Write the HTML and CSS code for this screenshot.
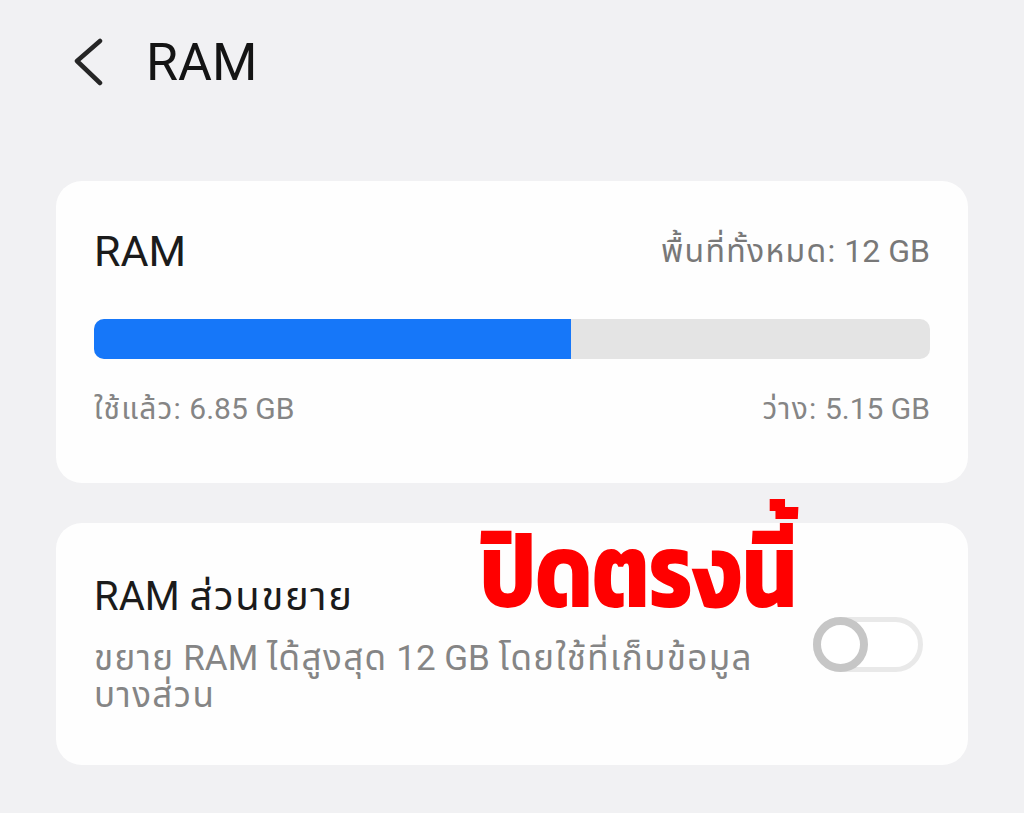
FILE: index.html
```html
<!DOCTYPE html>
<html lang="th">
<head>
<meta charset="utf-8">
<title>RAM</title>
<link rel="stylesheet" href="styles.css">
</head>
<body>
<div class="page">
  <header class="topbar">
    <svg class="back" width="32" height="50" viewBox="0 0 32 50" aria-hidden="true">
      <polyline points="26,3 3,23 26,45" fill="none" stroke="#262626" stroke-width="4.5" stroke-linecap="round" stroke-linejoin="round"/>
    </svg>
    <h1 class="topbar-title">RAM</h1>
  </header>

  <section class="card usage">
    <div class="usage-head">
      <span class="usage-label">RAM</span>
      <span class="usage-total"><span class="th">พื้นที่ทั้งหมด:</span> 12 GB</span>
    </div>
    <div class="bar"><div class="bar-fill" style="width:57.1%"></div></div>
    <div class="usage-meta">
      <span><span class="th">ใช้แล้ว:</span> 6.85 GB</span>
      <span><span class="th">ว่าง:</span> 5.15 GB</span>
    </div>
  </section>

  <section class="card ext">
    <div class="ext-text">
      <div class="ext-title">RAM <span class="th">ส่วนขยาย</span></div>
      <div class="ext-desc"><span class="th">ขยาย</span> RAM <span class="th">ได้สูงสุด</span> 12 GB <span class="th">โดยใช้ที่เก็บข้อมูล</span><br><span class="th">บางส่วน</span></div>
    </div>
    <div class="toggle" role="switch" aria-checked="false"><span class="knob"></span></div>
    <div class="note">ปิดตรงนี้</div>
  </section>
</div>
</body>
</html>
```
FILE: styles.css
```css
* { box-sizing: border-box; }
html, body { margin: 0; padding: 0; }
body {
  background: #f1f1f3;
  font-family: "Roboto", "Noto Sans", "Noto Sans Thai", sans-serif;
  color: #1b1b1b;
  width: 1024px;
  height: 813px;
  overflow: hidden;
}
.th { letter-spacing: 0.04em; }
.page {
  display: flex;
  flex-direction: column;
  padding: 0 56px;
}
.topbar {
  height: 126px;
  display: flex;
  align-items: center;
  padding-left: 18px;
  gap: 40px;
}
.back { display: block; }
.topbar-title {
  margin: 0;
  font-size: 52px;
  font-weight: 400;
  color: #141414;
  line-height: 60px;
}
.card {
  background: #fefefe;
  border-radius: 26px;
}
.usage {
  margin-top: 55px;
  height: 302px;
  padding: 44px 38px 0 38px;
  display: flex;
  flex-direction: column;
}
.usage-head {
  display: flex;
  justify-content: space-between;
  align-items: center;
  height: 52px;
}
.usage-label {
  font-size: 43px;
  line-height: 52px;
  color: #1b1b1b;
}
.usage-total {
  font-size: 32px;
  line-height: 40px;
  color: #787878;
}
.bar {
  margin-top: 42px;
  height: 40px;
  border-radius: 10px;
  background: #e4e4e4;
  overflow: hidden;
}
.bar-fill {
  height: 100%;
  background: #1677f9;
}
.usage-meta {
  margin-top: 32px;
  display: flex;
  justify-content: space-between;
  font-size: 30px;
  line-height: 36px;
  color: #858585;
}
.ext {
  position: relative;
  margin-top: 40px;
  height: 242px;
  padding: 0 45px 0 38px;
  display: flex;
  align-items: center;
  justify-content: space-between;
}
.ext-text {
  display: flex;
  flex-direction: column;
  gap: 20px;
}
.ext-title {
  font-size: 40px;
  line-height: 46px;
  color: #1b1b1b;
}
.ext-desc {
  font-size: 35px;
  line-height: 37px;
  color: #858585;
  white-space: nowrap;
}
.toggle {
  width: 110px;
  height: 55px;
  border: 5px solid #e9e9e9;
  border-radius: 28px;
  background: #fff;
  position: relative;
  flex: none;
}
.knob {
  position: absolute;
  left: -5px;
  top: -5px;
  width: 55px;
  height: 55px;
  border-radius: 50%;
  border: 8px solid #c6c6c6;
  background: #fff;
}
.note {
  position: absolute;
  left: 424px;
  top: -6px;
  font-family: "Kanit", "Noto Sans Thai", sans-serif;
  font-size: 105px;
  font-weight: 700;
  color: #ff0000;
  line-height: 105px;
  white-space: nowrap;
  transform: scaleX(0.82);
  transform-origin: left top;
}
```
